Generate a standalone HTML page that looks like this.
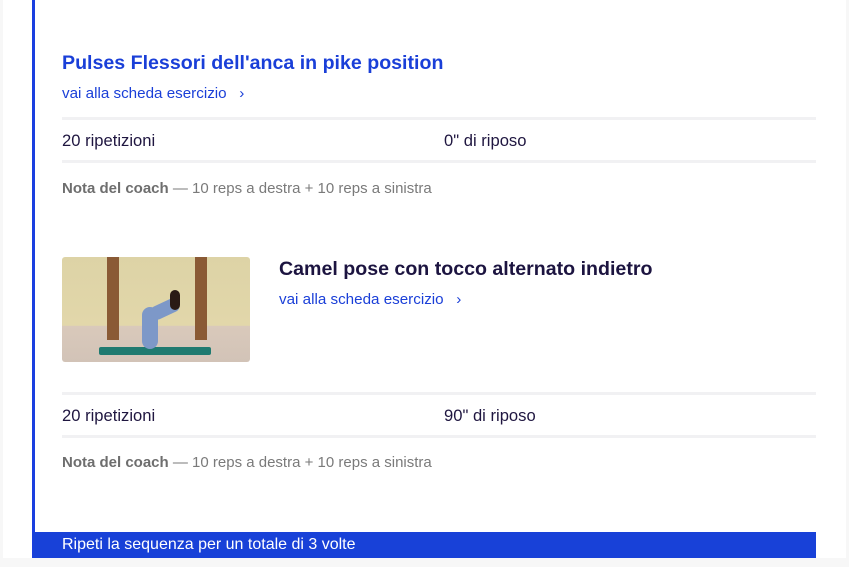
<!DOCTYPE html>
<html><head><style>
body{margin:0;width:849px;height:567px;background:#f7f7f7;font-family:"Liberation Sans",sans-serif;position:relative;overflow:hidden}
.page{position:absolute;left:3px;top:0;width:843px;height:558px;background:#fff}
.vl{position:absolute;left:32px;top:0;width:3px;height:558px;background:#1a3fe0}
.a{position:absolute;white-space:nowrap}
.t{font-size:19.6px;font-weight:bold;color:#1a3fd8}
.t2{font-size:19.6px;font-weight:bold;color:#1c1440}
.lk{font-size:15.2px;color:#1a3fd8}
.tx{font-size:16.6px;color:#1f1640}
.nt{font-size:15px;color:#7a7a7a}
.nt b{color:#6e6e6e}
.hr{position:absolute;left:62px;width:754px;height:3px;background:#f1f1f3}
.img{position:absolute;left:62px;top:257px;width:188px;height:105px;border-radius:3px;overflow:hidden;background:linear-gradient(#ddd3a6,#e2d7aa 65%,#d9c9bb 66%,#d2c3b7)}
.ban{position:absolute;left:33px;top:532px;width:783px;height:26px;background:#1841d8;color:#fff;font-size:16px;line-height:26px;padding-left:29px;box-sizing:border-box}
</style></head><body>
<div class="page"></div>
<div class="vl"></div>
<div class="a t" style="left:62px;top:52px">Pulses Flessori dell'anca in pike position</div>
<div class="a lk" style="left:62px;top:85px">vai alla scheda esercizio &nbsp;&nbsp;›</div>
<div class="hr" style="top:117px"></div>
<div class="a tx" style="left:62px;top:131px">20 ripetizioni</div>
<div class="a tx" style="left:444px;top:131px">0" di riposo</div>
<div class="hr" style="top:160px"></div>
<div class="a nt" style="left:62px;top:180px"><b>Nota del coach</b> — 10 reps a destra + 10 reps a sinistra</div>
<div class="img">
 <div style="position:absolute;left:45px;top:0;width:12px;height:83px;background:#8a5a35"></div>
 <div style="position:absolute;left:133px;top:0;width:12px;height:83px;background:#8a5a35"></div>
 <div style="position:absolute;left:37px;top:90px;width:112px;height:8px;background:#1f7a70;border-radius:2px"></div>
 <div style="position:absolute;left:80px;top:50px;width:16px;height:42px;background:#7d98c8;border-radius:8px"></div>
 <div style="position:absolute;left:88px;top:45px;width:30px;height:14px;background:#7d98c8;border-radius:6px;transform:rotate(-25deg)"></div>
 <div style="position:absolute;left:108px;top:33px;width:10px;height:20px;background:#2a1a15;border-radius:5px"></div>
</div>
<div class="a t2" style="left:279px;top:258px">Camel pose con tocco alternato indietro</div>
<div class="a lk" style="left:279px;top:291px">vai alla scheda esercizio &nbsp;&nbsp;›</div>
<div class="hr" style="top:392px"></div>
<div class="a tx" style="left:62px;top:406px">20 ripetizioni</div>
<div class="a tx" style="left:444px;top:406px">90" di riposo</div>
<div class="hr" style="top:435px"></div>
<div class="a nt" style="left:62px;top:454px"><b>Nota del coach</b> — 10 reps a destra + 10 reps a sinistra</div>
<div class="ban">Ripeti la sequenza per un totale di 3 volte</div>
</body></html>
